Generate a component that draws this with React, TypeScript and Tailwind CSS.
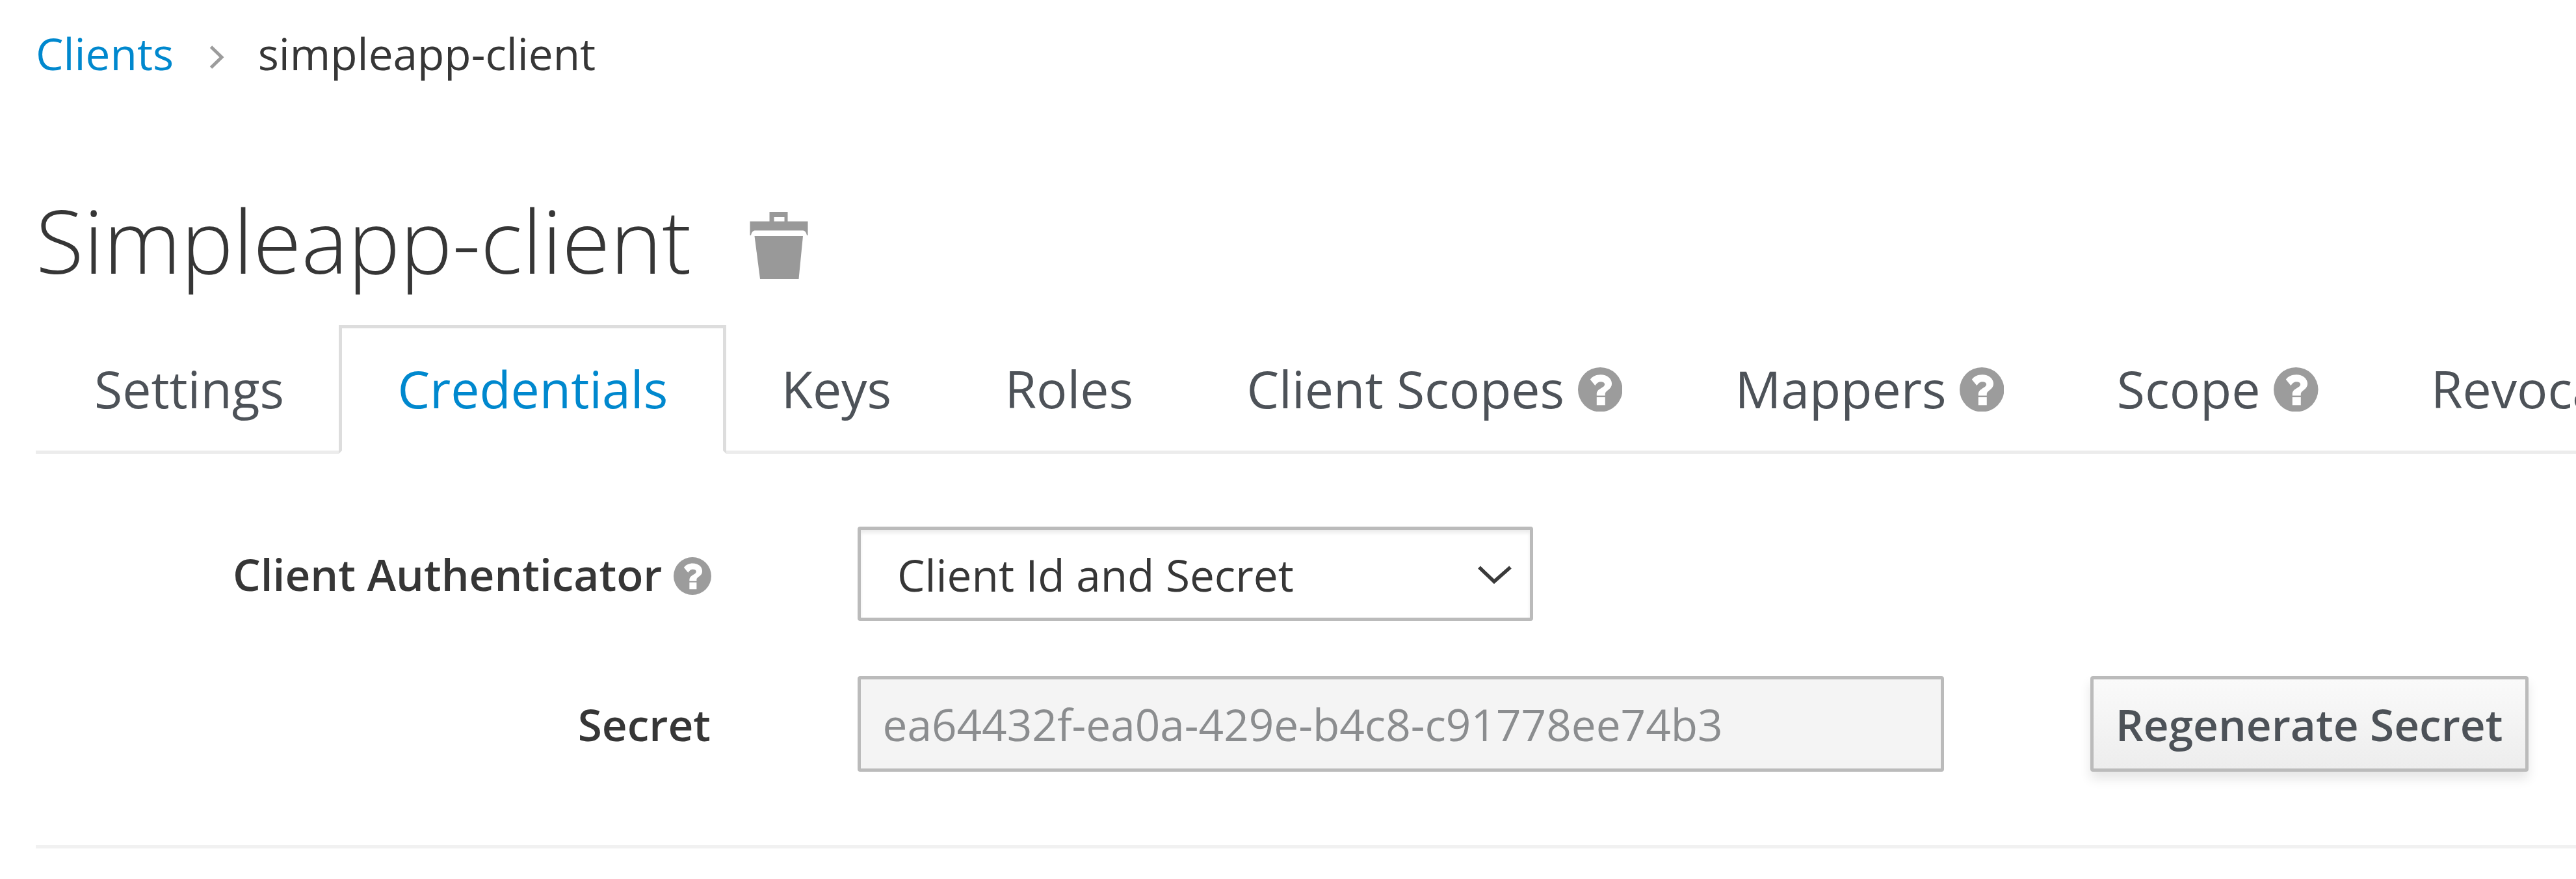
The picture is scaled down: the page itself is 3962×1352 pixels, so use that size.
import React from "react";

function HelpIcon({ className }: { className: string }) {
  return (
    <svg viewBox="0 0 100 100" className={className} fill="#9c9c9c" fillRule="evenodd">
      <path d="M50 0a50 50 0 1 0 0 100a50 50 0 1 0 0-100z M27.5 27.5C32 20.5 41 16.5 51 16.5C65 16.5 76 25 76 37C76 50.5 61 52 61 59.5V63.5H42V60C42 47.5 60 46.5 60 38.5C60 34.5 56 32.5 51 32.5C45 32.5 42 36.5 38.5 41z M42 67H61V85H42z" />
    </svg>
  );
}

function TrashIcon() {
  return (
    <svg viewBox="0 0 90 103" className="ml-[90px] mt-[16px] h-[103px] w-[90px] shrink-0" fill="#999999">
      <path
        fillRule="evenodd"
        d="M30.500 0H58.500V14.500H89.500V36H88C87 31 85 28.500 81 28.500H9C5 28.500 3 31 2 36H0.500V14.500H30.500z M37.500 8V14.500H53.500V8z"
      />
      <path d="M7.500 37H82L75.500 103H16z" />
    </svg>
  );
}

const tabs = [
  { label: "Settings" },
  { label: "Credentials", active: true },
  { label: "Keys" },
  { label: "Roles" },
  { label: "Client Scopes", help: true },
  { label: "Mappers", help: true },
  { label: "Scope", help: true },
  { label: "Revocation" },
];

export default function App() {
  return (
    <div className="h-[1352px] w-[3962px] overflow-hidden bg-white pl-[55px] pt-[52px] font-['Open_Sans',sans-serif] text-[67.5px] text-[#363636]">
      <nav className="flex h-[60px] items-center leading-[60px]">
        <a className="text-[#0088ce]">Clients</a>
        <svg viewBox="0 0 24 36" className="ml-[55px] mt-[11px] h-[36px] w-[24px]" fill="none" stroke="#9c9c9c" strokeWidth="5">
          <path d="M2.500 2L19 18L2.500 34" />
        </svg>
        <span className="ml-[50.500px]">simpleapp-client</span>
      </nav>

      <h1 className="mt-[167px] flex h-[180px] items-center text-[135px] font-light leading-[180px]">
        Simpleapp-client
        <TrashIcon />
      </h1>

      <ul className="mt-[41px] flex h-[198px] w-[4400px] border-b-[5px] border-[#ececec] text-[78.75px] text-[#4d5258]">
        {tabs.map((t) => (
          <li
            key={t.label}
            className={
              t.active
                ? "-mb-[5px] -ml-[5.6px] flex h-[198px] shrink-0 items-center border-[5px] border-[#dddddd] border-b-white bg-white px-[85px] pb-[3px] text-[#0088ce]"
                : "-ml-[5.6px] flex h-[198px] shrink-0 items-center px-[90px] pb-[3px] first:ml-0"
            }
          >
            <span className="whitespace-nowrap leading-[100px]">{t.label}</span>
            {t.help && <HelpIcon className="-mr-[1px] ml-[20.500px] mt-[3px] h-[68.500px] w-[68.500px] shrink-0" />}
          </li>
        ))}
      </ul>

      <form className="mt-[112px]">
        <div className="flex h-[145px] items-center">
          <label className="flex w-[1039px] items-center justify-end whitespace-nowrap font-semibold">
            <span className="leading-[100px]">Client Authenticator</span>
            <HelpIcon className="ml-[17px] mr-[0.500px] mt-[6px] h-[58px] w-[58px] shrink-0" />
          </label>
          <div className="ml-[225px] flex h-[145px] w-[1039px] items-center justify-between rounded-[4px] border-[5px] border-[#bbbbbb] bg-white pl-[56px] pr-[28px] shadow-[inset_0_5px_5px_rgba(3,3,3,0.075)]">
            <span className="pt-[2px] leading-[100px]">Client Id and Secret</span>
            <svg viewBox="0 0 52 28" className="mt-[3px] h-[28px] w-[52px]" fill="none" stroke="#3a3a3a" strokeWidth="5.500">
              <path d="M2 2.500L25 24.500L50 2.500" />
            </svg>
          </div>
        </div>

        <div className="mt-[85px] flex h-[147px] items-center">
          <label className="w-[1039px] pr-[1px] text-right font-semibold leading-[100px]">Secret</label>
          <div className="ml-[225px] flex h-[147px] w-[1671px] items-center rounded-[4px] border-[5px] border-[#bbbbbb] bg-[#f4f4f4] pl-[33.500px] leading-[100px] text-[#8b8d8f]">
            ea64432f-ea0a-429e-b4c8-c91778ee74b3
          </div>
          <button
            type="button"
            className="ml-[225px] flex h-[147px] w-[674px] items-center justify-center whitespace-nowrap rounded-[4px] border-[5px] border-[#bbbbbb] bg-linear-to-b from-[#fafafa] to-[#ededed] pr-[1px] font-semibold leading-[100px] text-[#4d5258] shadow-[0_11px_17px_rgba(3,3,3,0.1)]"
          >
            Regenerate Secret
          </button>
        </div>
      </form>

      <hr className="mt-[113px] border-t-[5px] border-[#f1f1f1]" />
    </div>
  );
}
